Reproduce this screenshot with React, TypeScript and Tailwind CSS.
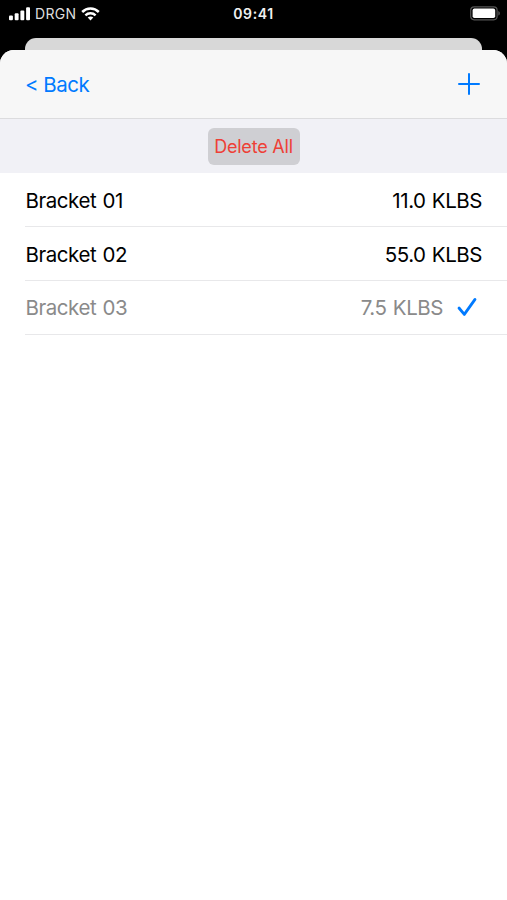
import React from 'react';

const brackets = [
  { name: 'Bracket 01', weight: '11.0 KLBS', selected: false, height: 'h-[54px]' },
  { name: 'Bracket 02', weight: '55.0 KLBS', selected: false, height: 'h-[54px]' },
  { name: 'Bracket 03', weight: '7.5 KLBS', selected: true, height: 'h-[53.5px]' },
];

const StatusBar = () => {
  return (
    <div className="grid h-[38px] grid-cols-3 items-start text-white">
      <div className="flex h-[27px] items-center pl-[9px]">
        <svg width="22" height="14" viewBox="0 0 22 14" fill="currentColor">
          <rect x="0" y="8.6" width="3.9" height="4.6" rx="1" />
          <rect x="5.7" y="6.2" width="3.9" height="7" rx="1" />
          <rect x="11.4" y="3.4" width="3.9" height="9.8" rx="1" />
          <rect x="17.1" y="0.2" width="3.9" height="13" rx="1" />
        </svg>
        <span className="ml-1 text-[14px] tracking-[0.3px] text-[#dedede]">DRGN</span>
        <svg className="ml-[5px]" width="19" height="14" viewBox="0 0 19 14" fill="none">
          <path d="M1.2 5C5.8 0.4 13.2 0.4 17.8 5" stroke="currentColor" strokeWidth="2.5" />
          <path d="M4.4 8.3C7.2 5.5 11.8 5.5 14.6 8.3" stroke="currentColor" strokeWidth="2.4" />
          <path d="M6.7 10.6C8.2 9.1 10.8 9.1 12.3 10.6L9.5 13.5Z" fill="currentColor" />
        </svg>
      </div>
      <div className="flex h-[27px] items-center justify-center text-[14px] font-semibold tracking-[0.6px] text-[#f0f0f0]">
        09:41
      </div>
      <div className="flex h-[27px] items-center justify-end pr-[6px]">
        <svg width="31" height="15" viewBox="0 0 31 15" fill="none">
          <rect x="0.7" y="0.8" width="26.4" height="13" rx="3.5" stroke="#555" strokeWidth="1.2" />
          <rect x="2.6" y="2.6" width="22.6" height="9.4" rx="1.8" fill="white" />
          <path d="M28.3 5V9.6C30.4 8.8 30.4 5.8 28.3 5Z" fill="#555" />
        </svg>
      </div>
    </div>
  );
};

const App = () => {
  return (
    <div className="flex h-screen flex-col overflow-hidden bg-black font-['Inter','Liberation_Sans',sans-serif]">
      <StatusBar />

      {/* Edge of the sheet underneath */}
      <div className="mx-[25px] h-3 shrink-0 rounded-t-[11px] bg-[#d8d8d8]" />

      <main className="flex-1 overflow-hidden rounded-t-[14px] bg-white text-[20.5px] tracking-[-0.5px] [word-spacing:1px]">
        <header className="flex h-[69px] items-center justify-between border-b border-[#dcdcde] bg-[#f7f7f7] pr-[27px] pl-[25px] text-[#007aff]">
          <button className="pt-[2px] tracking-[-0.5px] [word-spacing:0px]">&lt; Back</button>
          <button aria-label="Add bracket">
            <svg width="22" height="22" viewBox="0 0 22 22" fill="none" stroke="currentColor" strokeWidth="2" strokeLinecap="round">
              <path d="M11 1V21M1 11H21" />
            </svg>
          </button>
        </header>

        <div className="flex h-[54px] items-center justify-center bg-[#f1f1f6]">
          <button className="h-[37px] w-[92px] rounded-[6px] bg-[#cfcfd3] text-[18px] tracking-[-0.2px] whitespace-nowrap text-[#ee4036]">
            Delete All
          </button>
        </div>

        <ul className="pl-[25px]">
          {brackets.map((item) => (
            <li
              key={item.name}
              className={`flex ${item.height} items-center border-b border-[#e8e8ea] pt-[3px] pr-[25px] pl-[0.5px] ${
                item.selected ? 'text-[#8a8a8a]' : 'text-black'
              }`}
            >
              <span className="tracking-[-0.45px]">{item.name}</span>
              <span className="ml-auto tracking-[-0.45px]">{item.weight}</span>
              {item.selected && (
                <svg
                  className="mr-1 mb-[3px] ml-[14px]"
                  width="21"
                  height="20"
                  viewBox="0 0 21 20"
                  fill="none"
                  stroke="#007aff"
                  strokeWidth="2.8"
                  strokeLinecap="round"
                  strokeLinejoin="round"
                >
                  <path d="M2 11L7.3 17.4L18 2.4" />
                </svg>
              )}
            </li>
          ))}
        </ul>
      </main>
    </div>
  );
};

export default App;
